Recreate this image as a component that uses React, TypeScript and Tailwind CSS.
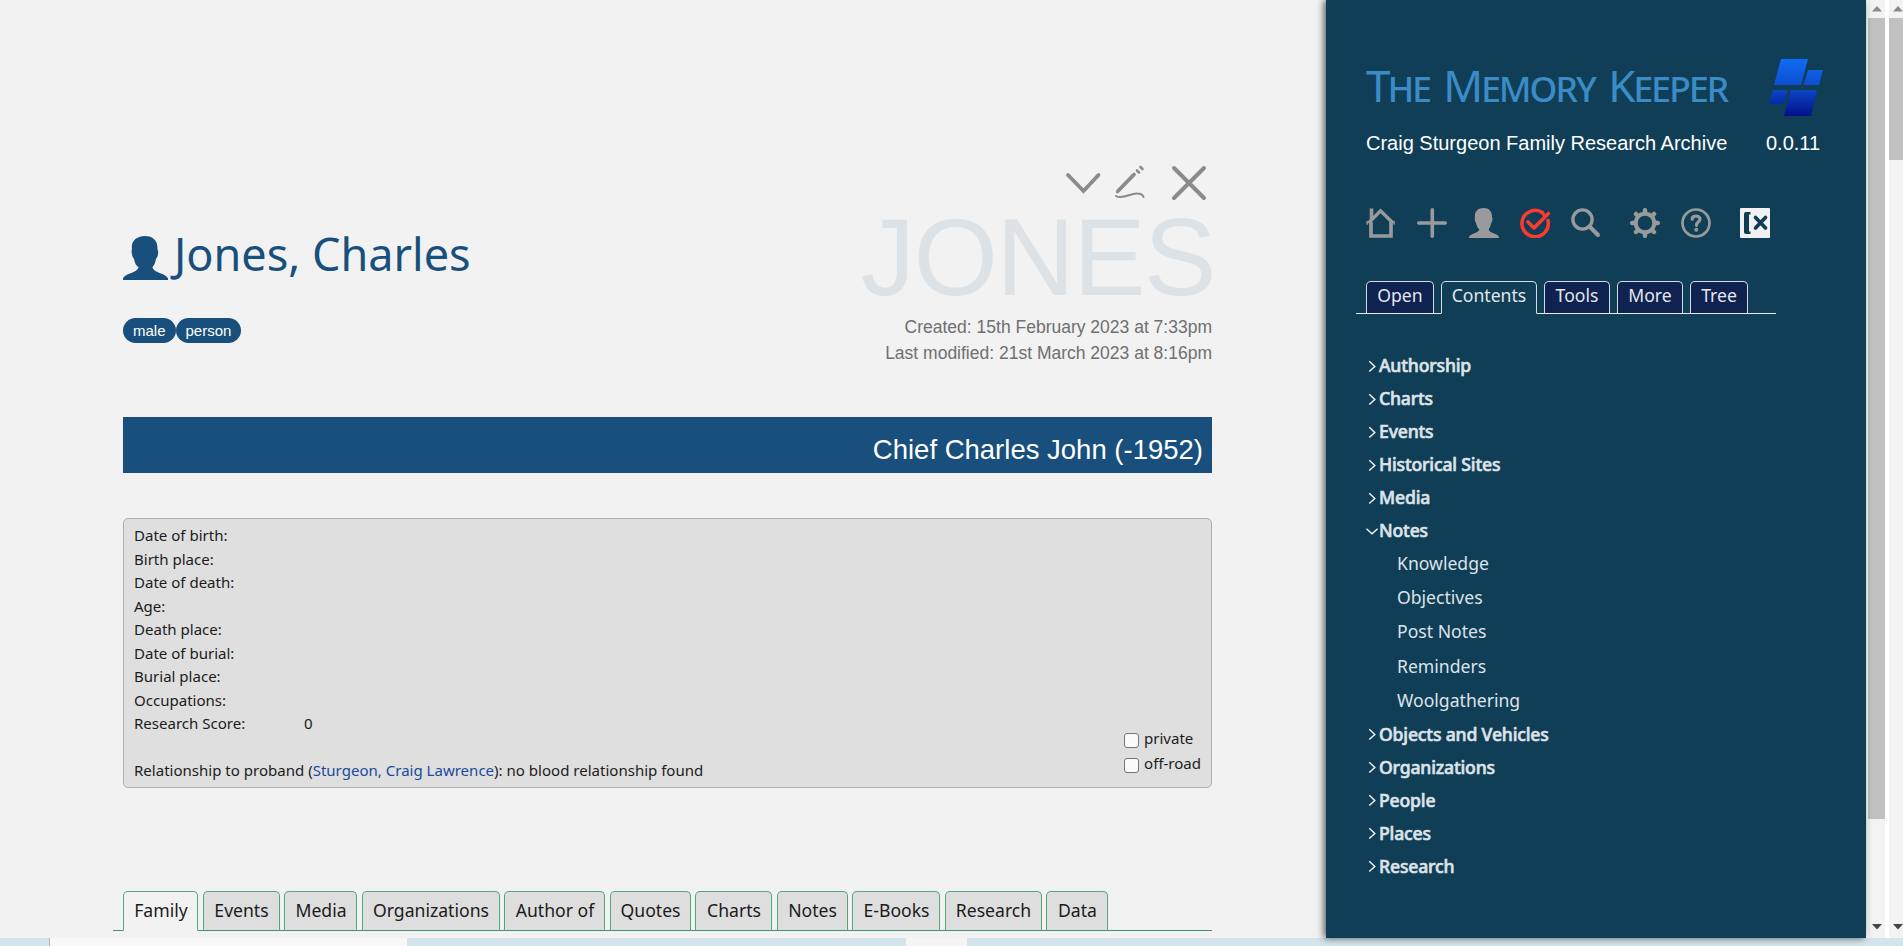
import type { ReactNode } from 'react';

const tags = ['male', 'person'];

const facts: [string, string][] = [
  ['Date of birth:', ''],
  ['Birth place:', ''],
  ['Date of death:', ''],
  ['Age:', ''],
  ['Death place:', ''],
  ['Date of burial:', ''],
  ['Burial place:', ''],
  ['Occupations:', ''],
  ['Research Score:', '0'],
];

const pageTabs: [string, string][] = [
  ['Family', 'w-[75px]'],
  ['Events', 'w-[77px]'],
  ['Media', 'w-[73px]'],
  ['Organizations', 'w-[138px]'],
  ['Author of', 'w-[101px]'],
  ['Quotes', 'w-[81px]'],
  ['Charts', 'w-[77px]'],
  ['Notes', 'w-[71px]'],
  ['E-Books', 'w-[88px]'],
  ['Research', 'w-[97px]'],
  ['Data', 'w-[62px]'],
];

const sideTabs: [string, string][] = [
  ['Open', 'w-[68px]'],
  ['Contents', 'w-[96px]'],
  ['Tools', 'w-[66px]'],
  ['More', 'w-[66px]'],
  ['Tree', 'w-[58px]'],
];

const sections: { name: string; items?: string[] }[] = [
  { name: 'Authorship' },
  { name: 'Charts' },
  { name: 'Events' },
  { name: 'Historical Sites' },
  { name: 'Media' },
  { name: 'Notes', items: ['Knowledge', 'Objectives', 'Post Notes', 'Reminders', 'Woolgathering'] },
  { name: 'Objects and Vehicles' },
  { name: 'Organizations' },
  { name: 'People' },
  { name: 'Places' },
  { name: 'Research' },
];

function Person({ className }: { className: string }) {
  return (
    <svg viewBox="0 0 45 44" className={className} fill="currentColor" preserveAspectRatio="none">
      <path d="M22 0C30 0 35 5 34.400 13C35.800 15 35.400 20 33 23C32 27.500 31 29.500 29.500 31C30 37 43 37 45 42.500V44H0V42.500C2 37 15 37 15.500 31C13 29.500 12 27.500 11 23C8.600 20 8.200 15 9 13C7.500 5 14 0 22 0Z" />
    </svg>
  );
}

function Icon({ children, className }: { children: ReactNode; className: string }) {
  return (
    <svg
      viewBox="0 0 30 30"
      className={`h-[30px] w-[30px] shrink-0 ${className}`}
      fill="none"
      stroke="currentColor"
      strokeLinecap="round"
      strokeLinejoin="round"
    >
      {children}
    </svg>
  );
}

function Toolbar() {
  return (
    <div className="flex h-[30px] text-[#999a9b]">
      <Icon className="mr-[21px]">
        <path d="M2.500 15L14.500 2.800L27 15" strokeWidth="3.400" strokeLinecap="butt" strokeLinejoin="miter" />
        <path d="M1.200 13.500V16M28 13.500V16" strokeWidth="1.500" />
        <path d="M5 14V28H25V14M5.500 12V0.500" strokeWidth="3.600" strokeLinecap="butt" strokeLinejoin="miter" />
      </Icon>
      <Icon className="mr-[22px]">
        <path d="M15.300 1.800V28.200M1.800 15H28.200" strokeWidth="3.600" />
      </Icon>
      <Person className="mr-[21px] h-[30px] w-[30px]" />
      <Icon className="mr-[21px] text-[#fb3b30]">
        <path d="M22.500 4.600A13.200 13.200 0 1 0 28 12.500M8 14L14 20L28.300 5.500" strokeWidth="3.600" />
        <path d="M21 4L25 8" strokeWidth="3" />
      </Icon>
      <Icon className="mr-[29px]">
        <circle cx="11.500" cy="11.500" r="9.600" strokeWidth="3.400" />
        <path d="M18.500 18.500L27 27" strokeWidth="4" />
      </Icon>
      <Icon className="mr-[21px]">
        <circle cx="15" cy="15" r="9.300" strokeWidth="4" />
        <path d="M15 2.200V4M15 26V27.800M2.200 15H4M26 15H27.800M6 6L7 7M23 23L24 24M24 6L23 7M7 23L6 24" strokeWidth="4.500" />
      </Icon>
      <Icon className="mr-[29px]">
        <circle cx="15" cy="15" r="13.500" strokeWidth="2.700" />
        <path d="M11.200 11.200C11.200 9.200 12.800 8 15 8C17.300 8 19 9.300 19 11.300C19 14 15.500 13.800 15.500 17.300" strokeWidth="3.200" />
        <circle cx="15.300" cy="21.700" r="1.100" strokeWidth="1.800" />
      </Icon>
      <Icon className="text-[#0f3c56]">
        <rect width="30" height="30" rx="1" fill="#f1f1f1" stroke="none" />
        <path d="M6 4H10.500V6.500H9V23.500H10.500V26H6Q4 26 4 24V6Q4 4 6 4Z" fill="currentColor" stroke="none" />
        <path d="M15.500 9.500L25.500 20M25.500 9.500L15.500 20" strokeWidth="3.700" />
      </Icon>
    </div>
  );
}

function Logo() {
  return (
    <svg viewBox="0 0 54 57" className="h-[57px] w-[54px]">
      <defs>
        <linearGradient id="blue" gradientUnits="userSpaceOnUse" x1="27" y1="0" x2="27" y2="57">
          <stop offset="0" stopColor="#0f6cf5" />
          <stop offset="0.500" stopColor="#0b4ccb" />
          <stop offset="1" stopColor="#03108a" />
        </linearGradient>
      </defs>
      <g fill="url(#blue)">
        <path d="M12 0H39L32 26H5Z" />
        <path d="M39 11H54L50 26H34.500Z" />
        <path d="M4 31H18.500L14.500 45H0Z" />
        <path d="M21.500 31H48L42 57H15Z" />
      </g>
    </svg>
  );
}

function Section({ name, items }: { name: string; items?: string[] }) {
  return (
    <li>
      <div className="flex h-[33px] items-center text-[#dfe3e8]">
        <svg viewBox="0 0 14 14" className="h-[14px] w-[13px] shrink-0" fill="none" stroke="#f5f7f9" strokeWidth="1.500">
          {items ? <path d="M0.500 4.500L6.500 10L12.500 4.500" /> : <path d="M3.500 2L9.500 7.500L3.500 13" />}
        </svg>
        <span className="font-medium tracking-[-0.170px] [-webkit-text-stroke:0.600px_#dfe3e8]">{name}</span>
      </div>
      {items && (
        <ul className="-mt-px pl-[31px]">
          {items.map((item) => (
            <li key={item} className="flex h-[34.260px] items-center text-[#dde3e8]">
              {item}
            </li>
          ))}
        </ul>
      )}
    </li>
  );
}

function Sidebar() {
  return (
    <aside className="z-10 h-[938px] w-[540px] shrink-0 bg-[#113e57] pl-[30px] font-['Noto_Sans',sans-serif] shadow-[-2px_0_7px_rgba(0,0,0,0.650)]">
      <div className="flex h-[117px] items-end pb-px pl-[10px]">
        <h1 className="h-[62px] w-[403px] text-[44px] leading-[63px] tracking-[-1.850px] whitespace-nowrap text-[#3b8bc6] [font-variant:small-caps] [word-spacing:3.500px]">
          The Memory Keeper
        </h1>
        <Logo />
      </div>
      <div className="flex h-[52px] items-center pl-[10px] font-['Liberation_Sans',sans-serif] text-[20px] text-white">
        <span className="w-[400px]">Craig Sturgeon Family Research Archive</span>
        <span>0.0.11</span>
      </div>
      <div className="mt-[39px] pl-[10px]">
        <Toolbar />
      </div>
      <div className="mt-[43px] flex h-[33px] w-[420px] items-stretch text-[17.600px] text-[#e3e7ec]">
        <div className="w-[10px] border-b border-[#e6eaee]" />
        {sideTabs.map(([name, width]) => (
          <div key={name} className="flex">
            <div
              className={`flex justify-center rounded-t-[5px] border border-[#d5dbe2] pt-px leading-[25px] ${width} ${
                name === 'Contents' ? 'border-b-transparent' : 'border-b-[#e6eaee] bg-[#0f2250]'
              }`}
            >
              {name}
            </div>
            <div className="w-[7px] border-b border-[#e6eaee]" />
          </div>
        ))}
        <div className="flex-1 border-b border-[#e6eaee]" />
      </div>
      <ul className="mt-[35px] pl-[10px] text-[17.600px]">
        {sections.map((s) => (
          <Section key={s.name} {...s} />
        ))}
      </ul>
    </aside>
  );
}

function Arrow({ down }: { down?: boolean }) {
  return (
    <svg viewBox="0 0 10 6" className="h-[6px] w-[10px] shrink-0">
      {down ? <path d="M0 0H10L5 5.500Z" fill="#454545" /> : <path d="M0 5.500H10L5 0Z" fill="#8a8a8a" />}
    </svg>
  );
}

function Scrollbar({ outer }: { outer?: boolean }) {
  return (
    <div className={`flex h-[938px] flex-col items-center justify-between bg-[#f3f3f3] ${outer ? 'w-[14px]' : 'w-[17px]'}`}>
      <div className="flex w-full flex-col items-center">
        <div className={`flex h-[18px] items-center ${outer ? 'pl-[3px]' : ''}`}>
          <Arrow />
        </div>
        <div className={`w-full bg-[#c1c1c1] ${outer ? 'h-[142px]' : 'h-[801px]'}`} />
      </div>
      <div className={`flex h-[22px] items-center ${outer ? 'pl-[3px]' : ''}`}>
        <Arrow down />
      </div>
    </div>
  );
}

function RecordCard() {
  return (
    <section className="flex h-[270px] justify-between rounded-[5px] border border-[#b0b0b0] bg-[#dfdfdf] pt-[4.600px] pr-[10px] pl-[10px] text-[15.040px] text-[#1c1c1c]">
      <div>
        {facts.map(([label, value]) => (
          <div key={label} className="flex h-[23.500px] items-center">
            <span className="w-[170px]">{label}</span>
            <span>{value}</span>
          </div>
        ))}
        <div className="mt-[23.900px] flex h-[23.500px] items-center whitespace-pre">
          Relationship to proband (<a className="text-[#1a4a9c]">Sturgeon, Craig Lawrence</a>): no blood relationship found
        </div>
      </div>
      <div className="flex flex-col pt-[202.400px]">
        {['private', 'off-road'].map((label) => (
          <label key={label} className="flex h-[25px] items-center">
            <span className="mt-[4px] mr-[5px] h-[15px] w-[15px] rounded-[3px] border border-[#767676] bg-[#fafafa]" />
            <span className="leading-[22px]">{label}</span>
          </label>
        ))}
      </div>
    </section>
  );
}

export default function App() {
  return (
    <div className="h-[946px] w-[1903px] overflow-hidden bg-[#f2f2f2]">
      <div className="flex h-[938px]">
        <main className="h-[938px] w-[1326px] shrink-0 pt-[165px] pl-[123px] font-['Noto_Sans',sans-serif]">
          <div className="w-[1089px]">
            <header className="flex h-[252px] justify-between">
              <div>
                <div className="mt-[57px] flex h-[64px] items-center text-[#184f7c]">
                  <Person className="mt-[7px] h-[44px] w-[45px]" />
                  <h2 className="ml-[6px] text-[45px] leading-[64px] whitespace-nowrap">Jones, Charles</h2>
                </div>
                <div className="mt-[32px] flex font-['Liberation_Sans',sans-serif] text-[15px] text-white">
                  {tags.map((tag) => (
                    <span key={tag} className="flex h-[25px] items-center rounded-full bg-[#184f7c] px-[10px] pt-px">
                      {tag}
                    </span>
                  ))}
                </div>
              </div>
              <div className="flex flex-col items-end font-['Liberation_Sans',sans-serif]">
                <svg viewBox="0 0 142 36" className="mr-[5px] h-[36px] w-[142px]" fill="none" stroke="#8b8b8b" strokeLinecap="round">
                  <path d="M3 10L18.500 26L33.500 10" strokeWidth="3.800" />
                  <path d="M53 26L69 9.500" strokeWidth="3.800" />
                  <path d="M52 27.500L53.500 25" strokeWidth="2" />
                  <path d="M72 5.500L74 7.500M75.500 2L77.500 4" strokeWidth="2.600" />
                  <path d="M51 31C57 35 66 28 72 28.500C76 28.500 78 30 78.500 32" strokeWidth="2" />
                  <path d="M109 3L139 33M139 3L109 33" strokeWidth="4" />
                </svg>
                <div className="-mr-[3px] h-[113px] text-[108.500px] leading-[113px] tracking-[-1.500px] text-[#dde2e6]">JONES</div>
                <div className="text-right text-[17.500px] leading-[26px] text-[#6f6f6f]">
                  <p>Created: 15th February 2023 at 7:33pm</p>
                  <p>Last modified: 21st March 2023 at 8:16pm</p>
                </div>
              </div>
            </header>
            <div className="flex h-[56px] items-center justify-end bg-[#184f7c] pt-[9px] pr-[9px] font-['Liberation_Sans',sans-serif] text-[27.500px] text-white">
              Chief Charles John (-1952)
            </div>
            <div className="mt-[45px]">
              <RecordCard />
            </div>
            <nav className="mt-[103px] -ml-[10px] flex h-[40px] w-[1099px] text-[17.600px] text-[#1b1b1b]">
              <div className="w-[10px] border-b border-[#3f8f7c]" />
              {pageTabs.map(([name, width]) => (
                <div key={name} className="flex">
                  <div
                    className={`flex items-center justify-center rounded-t-[5px] border border-[#55a67b] pb-[2px] pl-px whitespace-nowrap ${width} ${
                      name === 'Family' ? 'border-b-transparent' : 'border-b-[#3f8f7c] bg-[#dedede]'
                    }`}
                  >
                    {name}
                  </div>
                  <div className="w-[4.500px] border-b border-[#3f8f7c]" />
                </div>
              ))}
              <div className="flex-1 border-b border-[#3f8f7c]" />
            </nav>
          </div>
        </main>
        <Sidebar />
        <div className="flex w-[37px] justify-between bg-white pl-[2px]">
          <Scrollbar />
          <Scrollbar outer />
        </div>
      </div>
      <div className="flex h-[8px] bg-[#d3e4eb]">
        <div className="ml-[49px] h-full w-[358px] border-l border-[#b5b5b5] bg-[#f8f8f8]" />
        <div className="ml-[499px] h-full w-[61px] bg-[#f5f5f5]" />
      </div>
    </div>
  );
}
